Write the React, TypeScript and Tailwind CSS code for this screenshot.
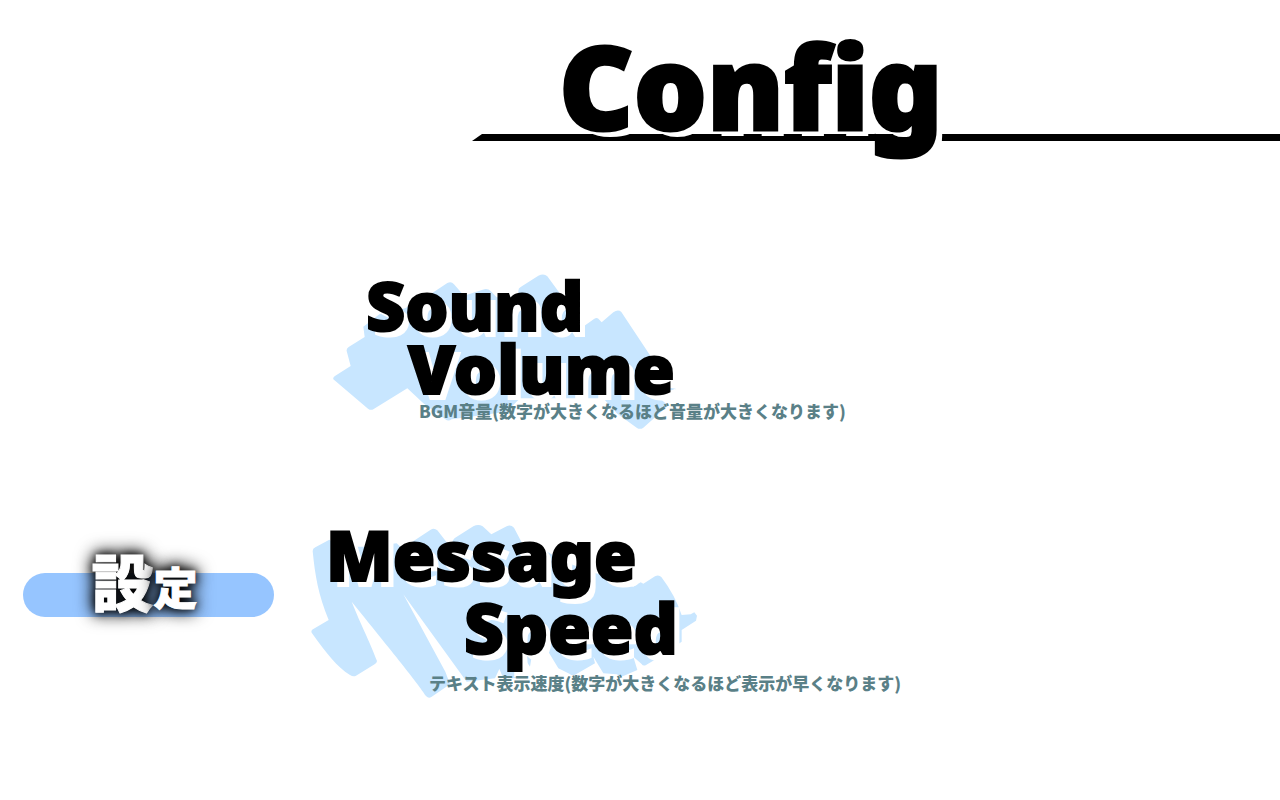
const black = "font-['Noto_Sans','Noto_Sans_CJK_JP',sans-serif] font-black";
const jp = "font-['Noto_Sans_CJK_JP',sans-serif] font-black";

function SoundBrush() {
  return (
    <svg aria-hidden="true" viewBox="0 0 1110 525" className="absolute left-0 top-0 -z-10 h-[175px] w-[370px]" fill="#c8e6ff">
      <path d="M40 343 Q38 336 46 332 L92 303 L80 258 Q79 250 86 246 L134 216 L130 185 L178 148 L255 130 L320 95 L382 54 Q394 48 402 58 L432 92 L488 74 Q503 69 512 78 L530 97 L595 97 V77 Q595 70 602 66 L655 32 Q672 24 682 34 L728 97 L785 188 L822 162 Q832 155 838 164 L845 172 L880 142 Q894 132 904 141 L1000 286 L1050 368 L1067 371 L1064 378 L1020 400 L1044 422 L970 488 Q960 495 950 488 L890 445 L850 400 L600 400 L560 440 L395 463 Q385 470 376 463 L310 415 L262 370 L160 433 Q152 437 144 431 Z" />
    </svg>
  );
}

function MessageBrush() {
  return (
    <svg aria-hidden="true" viewBox="0 0 1230 570" className="absolute left-0 top-0 -z-10 h-[190px] w-[410px]" fill="#c8e6ff">
      <path d="M38 108 Q38 101 46 97 L88 74 L120 95 H200 L290 85 L315 108 L335 82 L392 44 Q402 37 412 46 L440 82 L456 90 Q456 74 468 67 L520 34 Q535 26 548 34 L574 58 L620 34 Q632 28 642 38 L668 88 L740 110 L820 150 L1000 215 L1022 202 L1030 206 L1065 184 Q1076 178 1084 186 Q1125 240 1145 300 L1172 298 L1183 292 L1191 302 L1188 317 L1145 345 V380 L1080 425 L1038 450 Q1030 455 1024 446 L1000 425 L1012 465 L972 482 Q962 486 950 478 L910 475 L880 425 L885 445 L828 478 Q818 484 808 476 L775 460 L745 410 L700 395 L690 455 L680 440 L650 490 H610 L598 462 L585 490 L500 500 L310 238 L436 470 L450 508 L394 546 Q386 552 378 543 C350 500 300 440 155 260 C185 335 205 370 231 438 Q231 443 225 447 L168 482 Q160 486 150 480 C110 455 80 415 35 353 Q32 346 40 342 L86 315 C55 240 45 180 38 108 Z" />
    </svg>
  );
}

export default function App() {
  return (
    <div className="min-h-screen overflow-hidden bg-white text-black">
      <header className="relative isolate h-[200px]">
        <svg aria-hidden="true" viewBox="0 0 808 8" preserveAspectRatio="none" className="absolute left-[472px] right-0 top-[134px] -z-10 h-2 w-[calc(100%-472px)]">
          <path d="M0 7 L10 0 H808 V7 Z" />
        </svg>
        <h1 className={`${black} pl-[559px] pt-[26px] text-[115px] leading-[120px] [-webkit-text-stroke:3px_black] [text-shadow:7px_6px_0_#fff]`}>Config</h1>
      </header>
      <div className="flex">
        <nav className="w-[300px] shrink-0 pl-[23px] pt-[373px]">
          <button className={`${jp} flex h-11 w-[251px] items-end justify-center rounded-full bg-[#96c5ff] pb-1.5 pr-2 text-white [-webkit-text-stroke:1px_white] [text-shadow:0_0_20px_#000,0_0_16px_#000,0_0_8px_#000]`}>
            <span className="text-[62px] leading-[62px]">設</span>
            <span className="text-[44px] leading-[50px]">定</span>
          </button>
        </nav>
        <main className="flex flex-col gap-[75px] pt-[65px]">
          <section className="relative isolate ml-5 h-[175px]">
            <SoundBrush />
            <h2 className={`${black} pl-[46px] pt-2 text-[68px] leading-[63px] [-webkit-text-stroke:2px_black] [text-shadow:6px_6px_0_#fff]`}>
              <span className="block">Sound</span>
              <span className="block pl-[42px]">Volume</span>
            </h2>
            <p className={`${jp} whitespace-nowrap pl-[99px] text-[17px] leading-6 text-[#5a8087]`}>BGM音量(数字が大きくなるほど音量が大きくなります)</p>
          </section>
          <section className="relative isolate h-[190px]">
            <MessageBrush />
            <h2 className={`${black} pl-[26px] pt-[3px] text-[69px] leading-[73px] [-webkit-text-stroke:2px_black] [text-shadow:6px_6px_0_#fff]`}>
              <span className="block">Message</span>
              <span className="block pl-[138px]">Speed</span>
            </h2>
            <p className={`${jp} whitespace-nowrap pl-[129px] pt-[7px] text-[17px] leading-6 text-[#5a8087]`}>テキスト表示速度(数字が大きくなるほど表示が早くなります)</p>
          </section>
        </main>
      </div>
    </div>
  );
}
